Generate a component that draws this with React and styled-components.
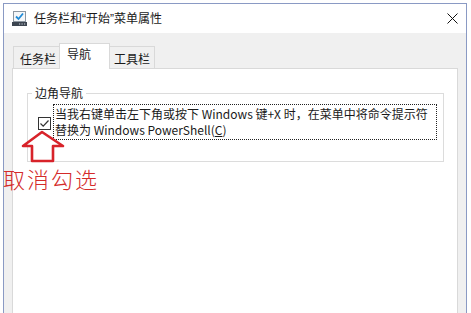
import React from 'react';
import styled, { createGlobalStyle } from 'styled-components';

const GlobalStyle = createGlobalStyle`
  html, body {
    margin: 0;
    background: #ffffff;
    overflow: hidden;
  }
  body {
    font-family: "Noto Sans CJK SC", "Noto Sans", sans-serif;
    font-size: 12px;
    color: #1a1a1a;
  }
`;

const Page = styled.div`
  position: relative;
  width: 471px;
  height: 313px;
  overflow: hidden;
`;

const Window = styled.div`
  box-sizing: border-box;
  margin: 3px 0 0 3px;
  width: 464px;
  height: 330px;
  border: 1px solid #8a9ac4;
  display: flex;
  flex-direction: column;
  background: #f0f0f0;
`;

const TitleBar = styled.div`
  height: 29px;
  flex-shrink: 0;
  background: #ffffff;
  display: flex;
  align-items: center;
  padding: 0 8px;
  gap: 7px;
`;

const Title = styled.span`
  flex: 1;
  line-height: 16px;
  white-space: nowrap;
`;

const Quote = styled.span`
  font-family: "Liberation Sans", sans-serif;
`;

const Body = styled.div`
  flex: 1;
  display: flex;
  flex-direction: column;
  padding: 10px 8px 0 8px;
`;

const TabRow = styled.div`
  display: flex;
  align-items: flex-end;
  padding-left: 1px;
  height: 25px;
`;

const Tab = styled.div`
  box-sizing: border-box;
  position: relative;
  width: ${(p) => p.$w}px;
  margin-left: ${(p) => p.$ml || 0}px;
  padding-left: ${(p) => p.$pl}px;
  line-height: 16px;
  white-space: nowrap;
  border: 1px solid #d9d9d9;
  border-bottom: none;
  background: ${(p) => (p.$active ? '#ffffff' : '#f0f0f0')};
  height: ${(p) => (p.$active ? 26 : 22)}px;
  padding-top: ${(p) => (p.$active ? 2 : 4)}px;
  margin-bottom: ${(p) => (p.$active ? -1 : 0)}px;
  z-index: ${(p) => (p.$active ? 1 : 0)};
`;

const Panel = styled.div`
  flex: 1;
  background: #ffffff;
  border: 1px solid #d9d9d9;
  display: flex;
  flex-direction: column;
`;

const Group = styled.fieldset`
  margin: 16px 13px 0 14px;
  padding: 3px 6px 21px 10px;
  border: 1px solid #dcdcdc;
  min-width: 0;
`;

const Legend = styled.legend`
  margin-left: -6px;
  padding: 0 3px;
  line-height: 16px;
`;

const CheckRow = styled.div`
  display: flex;
  align-items: center;
  gap: 2px;
`;

const CheckBox = styled.span`
  box-sizing: border-box;
  width: 13px;
  height: 13px;
  flex-shrink: 0;
  border: 1px solid #333333;
  background: #ffffff;
  display: flex;
  align-items: center;
  justify-content: center;
  margin-top: 2px;
`;

const Label = styled.label`
  flex: 1;
  border: 1px dotted #222222;
  padding: 1px;
  line-height: 16px;
  white-space: nowrap;
`;

const Annotation = styled.div`
  position: absolute;
  left: ${(p) => p.$x}px;
  top: ${(p) => p.$y}px;
`;

const RedNote = styled.span`
  display: block;
  font-size: 22px;
  font-weight: 300;
  line-height: 24px;
  letter-spacing: 2px;
  color: #d42a2a;
  white-space: nowrap;
`;

const AppIcon = () => (
  <svg width="15" height="15" viewBox="0 0 15 15">
    <rect x="1.5" y="0.5" width="12" height="10" fill="#f4f6f8" stroke="#8c96a0" />
    <path d="M4 5.5 L6.5 8 L11 2.5" fill="none" stroke="#1e8ad6" strokeWidth="1.8" />
    <rect x="0" y="11" width="15" height="4" fill="#3c4550" />
    <rect x="7" y="12.5" width="1.2" height="1" fill="#cfd6de" />
    <rect x="9.5" y="12.5" width="1.2" height="1" fill="#cfd6de" />
    <rect x="12" y="12.5" width="1.2" height="1" fill="#cfd6de" />
  </svg>
);

const CloseIcon = () => (
  <svg width="11" height="11" viewBox="0 0 11 11">
    <path d="M0.5 0.5 L10.5 10.5 M10.5 0.5 L0.5 10.5" stroke="#111111" strokeWidth="1" />
  </svg>
);

const Tick = () => (
  <svg width="11" height="11" viewBox="0 0 11 11">
    <path d="M1.5 5.5 L4.2 8.2 L9.5 2.5" fill="none" stroke="#333333" strokeWidth="1.2" />
  </svg>
);

const UpArrow = () => (
  <svg width="46" height="34" viewBox="0 0 46 34">
    <polygon
      points="21,2 42,16 32,16 32,31 11,31 11,16 2,16"
      fill="none"
      stroke="#d8232a"
      strokeWidth="2.6"
      strokeLinejoin="round"
    />
  </svg>
);

export default function App() {
  return (
    <Page>
      <GlobalStyle />
      <Window>
        <TitleBar>
          <AppIcon />
          <Title>
            任务栏和<Quote>“</Quote>开始<Quote>”</Quote>菜单属性
          </Title>
          <CloseIcon />
        </TitleBar>
        <Body>
          <TabRow>
            <Tab $w={47} $pl={6}>任务栏</Tab>
            <Tab $w={51} $ml={-1} $pl={7} $active>导航</Tab>
            <Tab $w={46} $ml={-1} $pl={4}>工具栏</Tab>
          </TabRow>
          <Panel>
            <Group>
              <Legend>边角导航</Legend>
              <CheckRow>
                <CheckBox>
                  <Tick />
                </CheckBox>
                <Label>
                  当我右键单击左下角或按下 Windows 键+X 时，在菜单中将命令提示符
                  <br />
                  替换为 Windows PowerShell(<u>C</u>)
                </Label>
              </CheckRow>
            </Group>
          </Panel>
        </Body>
      </Window>
      <Annotation $x={21} $y={130}>
        <UpArrow />
      </Annotation>
      <Annotation $x={3} $y={166}>
        <RedNote>取消勾选</RedNote>
      </Annotation>
    </Page>
  );
}
